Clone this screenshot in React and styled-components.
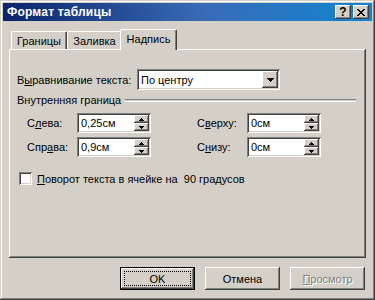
import React from 'react'
import styled, { createGlobalStyle } from 'styled-components'

const GlobalStyle = createGlobalStyle`
  html, body {
    margin: 0;
    padding: 0;
    background: #d4d0c8;
  }
`

const raised = `
  box-shadow: inset -1px -1px #404040, inset 1px 1px #ffffff,
    inset -2px -2px #808080, inset 2px 2px #d4d0c8;
`

const sunken = `
  box-shadow: inset 1px 1px #808080, inset -1px -1px #ffffff,
    inset 2px 2px #404040, inset -2px -2px #d4d0c8;
`

const Window = styled.div`
  width: 375px;
  height: 300px;
  box-sizing: border-box;
  padding: 3px;
  display: flex;
  flex-direction: column;
  background: #d4d0c8;
  box-shadow: inset -1px -1px #404040, inset 1px 1px #d4d0c8,
    inset -2px -2px #808080, inset 2px 2px #ffffff;
  font-family: 'Liberation Sans', Arial, sans-serif;
  font-size: 11px;
  color: #000;
`

const TitleBar = styled.div`
  height: 18px;
  flex: none;
  display: flex;
  align-items: center;
  padding: 0 3px 0 4px;
  background: linear-gradient(90deg, #0a246a 0%, #3a6cb8 55%, #1084d0 100%);
`

const Title = styled.div`
  flex: 1;
  color: #ffffff;
  font-weight: bold;
  font-size: 12px;
  letter-spacing: 0.2px;
`

const CaptionButton = styled.div`
  width: 16px;
  height: 14px;
  margin-left: 2px;
  display: flex;
  align-items: center;
  justify-content: center;
  background: #d4d0c8;
  font-weight: bold;
  font-size: 12px;
  line-height: 14px;
  ${raised}
`

const Body = styled.div`
  flex: 1;
  display: flex;
  flex-direction: column;
  padding: 0 6px 7px 6px;
`

const TabStrip = styled.div`
  height: 28px;
  flex: none;
  display: flex;
  align-items: flex-end;
  padding-left: 2px;
`

const Tab = styled.div`
  position: relative;
  z-index: 1;
  box-sizing: border-box;
  width: ${p => p.$width}px;
  height: ${p => (p.$active ? 21 : 18)}px;
  margin: ${p => (p.$active ? '0 -2px -1px -2px' : '0')};
  padding-top: ${p => (p.$active ? 3 : 3)}px;
  text-align: center;
  background: #d4d0c8;
  border-top: 1px solid #ffffff;
  border-left: 1px solid #ffffff;
  border-right: 1px solid #404040;
  border-radius: 2px 2px 0 0;
  box-shadow: inset -1px 0 #808080;
`

const Panel = styled.div`
  flex: 1;
  display: flex;
  flex-direction: column;
  padding: 20px 9px 0 8px;
  ${raised}
`

const Row = styled.div`
  display: flex;
  align-items: center;
  height: ${p => p.$height || 20}px;
  margin-top: ${p => p.$top || 0}px;
  padding-left: ${p => p.$indent || 0}px;
`

const Label = styled.div`
  width: ${p => p.$width}px;
  flex: none;
  white-space: pre;
`

const U = styled.span`
  text-decoration: underline;
`

const Combo = styled.div`
  width: 143px;
  height: 21px;
  box-sizing: border-box;
  padding: 2px;
  display: flex;
  align-items: center;
  background: #ffffff;
  ${sunken}
`

const FieldText = styled.div`
  flex: 1;
  padding-left: 2px;
`

const DropButton = styled.div`
  width: 16px;
  height: 17px;
  display: flex;
  align-items: center;
  justify-content: center;
  background: #d4d0c8;
  ${raised}
`

const GroupHeader = styled.div`
  display: flex;
  align-items: center;
  height: 13px;
  margin-top: 3px;
  gap: 4px;
`

const EtchedLine = styled.div`
  flex: 1;
  height: 1px;
  margin-right: 1px;
  margin-top: 1px;
  border-top: 1px solid #808080;
  border-bottom: 1px solid #ffffff;
`

const Spin = styled.div`
  width: 74px;
  height: 20px;
  box-sizing: border-box;
  padding: 2px;
  display: flex;
  align-items: center;
  background: #ffffff;
  ${sunken}
`

const SpinButtons = styled.div`
  width: 15px;
  height: 16px;
  display: flex;
  flex-direction: column;
`

const SpinButton = styled.div`
  flex: 1;
  display: flex;
  align-items: center;
  justify-content: center;
  background: #d4d0c8;
  ${raised}
`

const Gap = styled.div`
  width: ${p => p.$width}px;
  flex: none;
`

const CheckBox = styled.div`
  width: 13px;
  height: 13px;
  margin: 0 5px 0 2px;
  background: #ffffff;
  ${sunken}
`

const ButtonRow = styled.div`
  display: flex;
  justify-content: flex-end;
  gap: 10px;
  margin-top: 9px;
  margin-right: 1px;
`

const Button = styled.div`
  position: relative;
  width: 75px;
  height: 23px;
  box-sizing: border-box;
  display: flex;
  align-items: center;
  justify-content: center;
  background: #d4d0c8;
  border: ${p => (p.$default ? '1px solid #000000' : 'none')};
  color: ${p => (p.$disabled ? '#808080' : '#000000')};
  text-shadow: ${p => (p.$disabled ? '1px 1px #ffffff' : 'none')};
  ${raised}

  ${p =>
    p.$default &&
    `
    &::after {
      content: '';
      position: absolute;
      inset: 3px;
      border: 1px dotted #000000;
    }
  `}
`

const ArrowDown = ({ w = 7, h = 4 }) => (
  <svg width={w} height={h} viewBox={`0 0 ${w} ${h}`} shapeRendering="crispEdges">
    <polygon points={`0,0 ${w},0 ${w / 2},${h}`} fill="#000" />
  </svg>
)

const ArrowUp = ({ w = 5, h = 3 }) => (
  <svg width={w} height={h} viewBox={`0 0 ${w} ${h}`} shapeRendering="crispEdges">
    <polygon points={`0,${h} ${w},${h} ${w / 2},0`} fill="#000" />
  </svg>
)

const CloseGlyph = () => (
  <svg width="8" height="7" viewBox="0 0 8 7" shapeRendering="crispEdges">
    <path d="M0 0h2v1H0zM6 0h2v1H6zM1 1h2v1H1zM5 1h2v1H5zM2 2h4v1H2zM3 3h2v1H3zM2 4h4v1H2zM1 5h2v1H1zM5 5h2v1H5zM0 6h2v1H0zM6 6h2v1H6z" fill="#000" />
  </svg>
)

const SpinField = ({ value }) => (
  <Spin>
    <FieldText>{value}</FieldText>
    <SpinButtons>
      <SpinButton>
        <ArrowUp />
      </SpinButton>
      <SpinButton>
        <ArrowDown w={5} h={3} />
      </SpinButton>
    </SpinButtons>
  </Spin>
)

const App = () => (
  <>
    <GlobalStyle />
    <Window>
      <TitleBar>
        <Title>Формат таблицы</Title>
        <CaptionButton>?</CaptionButton>
        <CaptionButton>
          <CloseGlyph />
        </CaptionButton>
      </TitleBar>
      <Body>
        <TabStrip>
          <Tab $width={56}>Границы</Tab>
          <Tab $width={55}>Заливка</Tab>
          <Tab $width={57} $active>
            Надпись
          </Tab>
        </TabStrip>
        <Panel>
          <Row $height={21}>
            <Label $width={120}>
              В<U>ы</U>равнивание текста:
            </Label>
            <Combo>
              <FieldText>По центру</FieldText>
              <DropButton>
                <ArrowDown />
              </DropButton>
            </Combo>
          </Row>
          <GroupHeader>
            <span>Внутренняя граница</span>
            <EtchedLine />
          </GroupHeader>
          <Row $top={7} $indent={10}>
            <Label $width={50}>
              С<U>л</U>ева:
            </Label>
            <SpinField value="0,25см" />
            <Gap $width={46} />
            <Label $width={50}>
              С<U>в</U>ерху:
            </Label>
            <SpinField value="0см" />
          </Row>
          <Row $top={4} $indent={10}>
            <Label $width={50}>
              Спр<U>а</U>ва:
            </Label>
            <SpinField value="0,9см" />
            <Gap $width={46} />
            <Label $width={50}>
              С<U>н</U>изу:
            </Label>
            <SpinField value="0см" />
          </Row>
          <Row $top={13} $height={17}>
            <CheckBox />
            <Label>
              <U>П</U>оворот текста в ячейке на  90 градусов
            </Label>
          </Row>
        </Panel>
        <ButtonRow>
          <Button $default>OK</Button>
          <Button>Отмена</Button>
          <Button $disabled>
            <span>
              <U>П</U>росмотр
            </span>
          </Button>
        </ButtonRow>
      </Body>
    </Window>
  </>
)

export default App
